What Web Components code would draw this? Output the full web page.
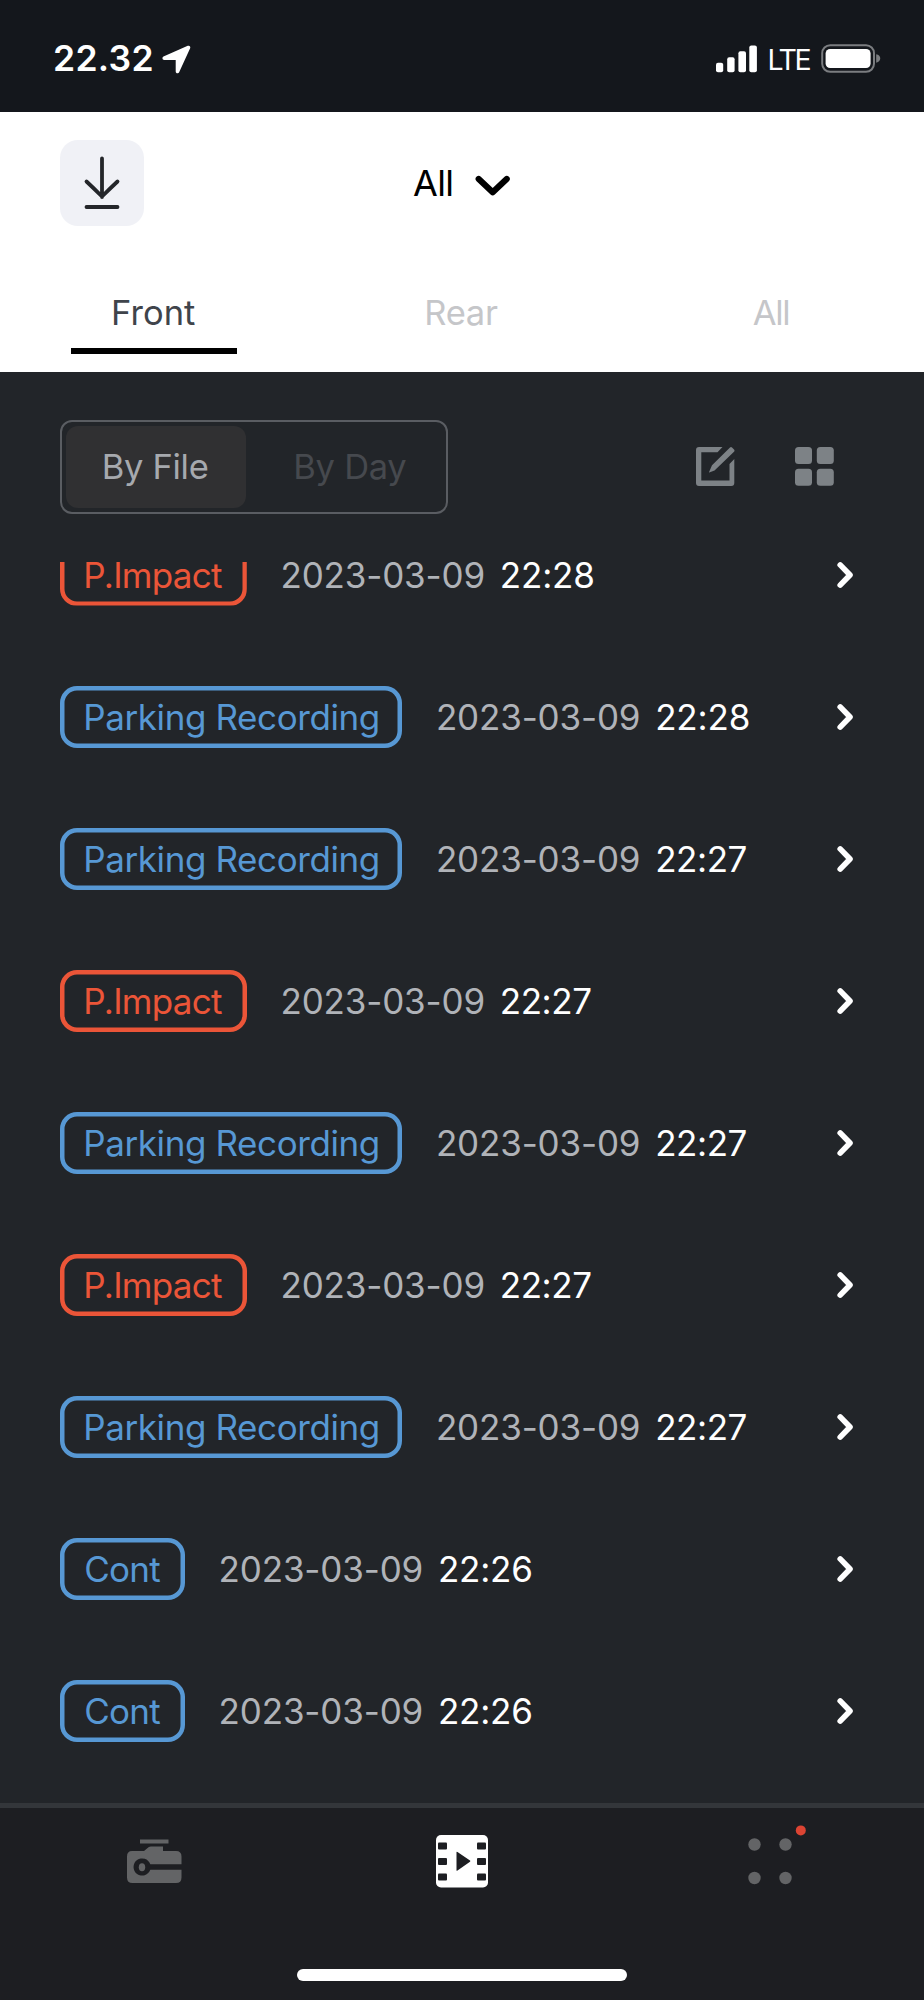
<!DOCTYPE html>
<html lang="en">
<head>
<meta charset="utf-8">
<title>Recordings</title>
<style>
html,body{margin:0;padding:0;background:#222529}
body{width:924px;height:2000px;overflow:hidden;font-family:Inter,"Liberation Sans",sans-serif}
</style>
</head>
<body>
<recordings-app></recordings-app>
<script>
function define(name, html, setup) {
  customElements.define(name, class extends HTMLElement {
    connectedCallback() {
      if (this.shadowRoot) return;
      const root = this.attachShadow({ mode: 'open' });
      const t = document.createElement('template');
      t.innerHTML = html;
      root.append(t.content.cloneNode(true));
      if (setup) setup(this, root);
    }
  });
}

// A label whose tracking is adjusted so that its ink fills the width in "w".
const pen = document.createElement('canvas').getContext('2d');
define('fit-text', `<style>
:host{display:block;flex:none;height:40px;line-height:40px;white-space:pre}
span{display:block;white-space:pre}
</style><span></span>`, (el, root) => {
  const text = el.getAttribute('text');
  const size = +(el.getAttribute('size') || 35);
  const weight = el.getAttribute('weight') || 400;
  const w = +el.getAttribute('w');
  const span = root.querySelector('span');
  span.textContent = text;
  span.style.fontSize = size + 'px';
  span.style.fontWeight = weight;
  pen.font = `${weight} ${size}px Inter, "Liberation Sans", sans-serif`;
  const m = pen.measureText(text);
  const ink = m.actualBoundingBoxLeft + m.actualBoundingBoxRight;
  span.style.letterSpacing = ((w - ink) / (text.length - 1)).toFixed(3) + 'px';
  span.style.marginLeft = m.actualBoundingBoxLeft.toFixed(2) + 'px';
  el.style.width = w + 'px';
});

define('status-bar', `<style>
:host{display:flex;box-sizing:border-box;height:111.5px;padding:0 42px 0 55px;background:#14171c;color:#fff;align-items:flex-start}
.time{margin-top:39px}
svg{display:block;flex:none}
.loc{margin:44px 0 0 9.8px}
.sig{margin:44px 0 0 auto}
.lte{margin:40px 0 0 12px}
.bat{margin:43px 0 0 10.6px}
</style>
<fit-text class="time" text="22.32" size="35.5" weight="600" w="96.5"></fit-text>
<svg class="loc" width="31" height="31" viewBox="0 0 31 31"><path d="M27.5 3.5 16.500 27.500V14.200H3.200Z" fill="#fff" stroke="#fff" stroke-width="3.600" stroke-linejoin="round"/></svg>
<svg class="sig" width="41" height="29" viewBox="0 0 41 29" fill="#fff"><rect x="0" y="18.7" width="7.2" height="9.6" rx="2"/><rect x="11.2" y="13.2" width="7.4" height="15.1" rx="2"/><rect x="22.4" y="7.2" width="7.6" height="21.1" rx="2"/><rect x="33.3" y="1.4" width="7.6" height="26.9" rx="2"/></svg>
<fit-text class="lte" text="LTE" size="28.5" w="41"></fit-text>
<svg class="bat" width="61" height="31" viewBox="0 0 61 31"><rect x="1.2" y="2.200" width="51.800" height="26.600" rx="8" fill="none" stroke="#7b7d80" stroke-width="2"/><rect x="4.600" y="6" width="45" height="19" rx="4.500" fill="#fff"/><path d="M55.200 11.300c5.400 1 5.400 7.400 0 8.400Z" fill="#7b7d80"/></svg>`);

define('title-bar', `<style>
:host{display:flex;height:144px;box-sizing:border-box;padding:28.5px 0 0 60px;align-items:flex-start;background:#fff;color:#000}
.dl{width:84px;height:85.5px;border-radius:18px;background:#f0f1f6;flex:none}
svg{display:block;flex:none}
fit-text{margin:23px 0 0 269px}
.ch{margin:31px 0 0 23px}
</style>
<div class="dl"><svg width="84" height="85" viewBox="0 0 84 85" fill="none" stroke="#24262a" stroke-width="3.8" stroke-linecap="round"><path d="M42 18.5V57M26.5 41.5Q34 48.500 42 56.500 50 48.500 57.500 41.500M26.500 67H57.500"/></svg></div>
<fit-text text="All" size="36" w="38.3"></fit-text>
<svg class="ch" width="38" height="28" viewBox="0 0 38 28"><path d="M4.700 8 18.700 21.300 32.700 8" fill="none" stroke="#000" stroke-width="6.200" stroke-linecap="round" stroke-linejoin="round"/></svg>`);

define('camera-tab', `<style>
:host{display:flex;flex-direction:column;align-items:center;color:#c5c6c9;box-sizing:border-box;height:116.500px;padding-top:37px}
:host([active]){color:#3f444b}
fit-text{padding-left:1.200px}
i{display:none;width:165.500px;height:5.500px;background:#000;margin-top:15.500px}
:host([active]) i{display:block}
</style><i></i>`, (el, root) => {
  const label = document.createElement('fit-text');
  label.setAttribute('text', el.getAttribute('text'));
  label.setAttribute('size', 34.5);
  label.setAttribute('w', el.getAttribute('w'));
  root.querySelector('i').before(label);
});

define('camera-tabs', `<style>
:host{display:grid;grid-template-columns:repeat(3,308px);background:#fff}
</style><camera-tab active text="Front" w="81"></camera-tab><camera-tab text="Rear" w="70.700"></camera-tab><camera-tab text="All" w="35.500"></camera-tab>`);

define('view-tools', `<style>
:host{display:flex;align-items:flex-start;box-sizing:border-box;height:189.500px;padding:47.700px 90px 0 59.700px}
.seg{display:flex;box-sizing:border-box;width:388.300px;height:94.300px;border:2px solid #5a5d62;border-radius:12px;padding:4.500px}
.seg div{box-sizing:border-box;display:flex;align-items:center;justify-content:center;height:81.500px;border-radius:12px}
.on{width:180px;background:#303032;color:#a6a9ae}
.off{flex:1;color:#46494e;padding-left:15px}
svg{display:block;flex:none;margin-top:27.300px}
.edit{margin-left:auto}
.grid{margin-left:60.500px}
</style>
<div class="seg"><div class="on"><fit-text text="By File" size="34.500" w="103"></fit-text></div><div class="off"><fit-text text="By Day" size="34.500" w="110"></fit-text></div></div>
<svg class="edit" width="39" height="39" viewBox="0 0 39 39" fill="#7d8286"><path d="M26.500 0 21.500 5.200H5.300V33.500H33.500V17L38.300 12V36a3 3 0 0 1-3 3H3a3 3 0 0 1-3-3V3A3 3 0 0 1 3 0Z"/><path d="M34 .6Q35-.4 36 .6L38 2.600Q39 3.600 38 4.700L18.500 23.500 13.200 25.600Q12.800 25.300 13.200 24.800L16 18.200Z"/></svg>
<svg class="grid" width="39" height="39" viewBox="0 0 39 39" fill="#7d8286"><rect width="17" height="17" rx="3.500"/><rect x="21.800" width="17" height="17" rx="3.500"/><rect y="21.800" width="17" height="17" rx="3.500"/><rect x="21.800" y="21.800" width="17" height="17" rx="3.500"/></svg>`);

const KINDS = {
  impact: { label: 'P.Impact', w: 135.800, box: 187.200, color: '#eb5538' },
  parking: { label: 'Parking Recording', w: 291.500, box: 342.600, color: '#5798d4' },
  cont: { label: 'Cont', w: 74, box: 125.300, color: '#5798d4' }
};
define('record-badge', `<style>
:host{position:relative;display:flex;flex:none;box-sizing:border-box;height:62px;align-items:center;padding-left:26.700px}
.frame{position:absolute;inset:0;border-radius:17px;box-shadow:inset 0 0 0 4.500px currentColor}
:host([cut]) .frame{clip-path:inset(18.500px 0 0 0)}
</style><div class="frame"></div>`, (el, root) => {
  const k = KINDS[el.getAttribute('kind')];
  el.style.color = k.color;
  el.style.width = k.box + 'px';
  const t = document.createElement('fit-text');
  t.setAttribute('text', k.label);
  t.setAttribute('w', k.w);
  root.append(t);
});

const TIME_WIDTH = { '22:28': 91.500, '22:27': 89.400, '22:26': 91.400 };
define('record-row', `<style>
:host{display:flex;flex:none;align-items:center;box-sizing:border-box;height:142.100px;padding:0 69px 0 59.600px;color:#fff}
.date{color:#b0b3b8;margin-left:35.700px}
.time{margin-left:18.300px}
svg{margin-left:auto;flex:none;display:block}
</style>`, (el, root) => {
  const time = el.getAttribute('time');
  const t = document.createElement('template');
  t.innerHTML = `<record-badge kind="${el.getAttribute('kind')}"${el.hasAttribute('cut') ? ' cut' : ''}></record-badge>
<fit-text class="date" text="2023-03-09" w="201"></fit-text>
<fit-text class="time" text="${time}" w="${TIME_WIDTH[time]}"></fit-text>
<svg width="20" height="30" viewBox="0 0 20 30"><path d="M5.200 4.900 15 15 5.200 25.100" fill="none" stroke="#fff" stroke-width="5.600" stroke-linecap="round" stroke-linejoin="round"/></svg>`;
  root.append(t.content);
});

define('record-list', `<style>
:host{display:flex;flex-direction:column;height:1241.500px}
record-row:first-of-type{margin-top:-58px}
</style>
<record-row kind="impact" time="22:28" cut></record-row>
<record-row kind="parking" time="22:28"></record-row>
<record-row kind="parking" time="22:27"></record-row>
<record-row kind="impact" time="22:27"></record-row>
<record-row kind="parking" time="22:27"></record-row>
<record-row kind="impact" time="22:27"></record-row>
<record-row kind="parking" time="22:27"></record-row>
<record-row kind="cont" time="22:26"></record-row>
<record-row kind="cont" time="22:26"></record-row>`);

define('nav-bar', `<style>
:host{display:flex;flex-direction:column;align-items:center;box-sizing:border-box;height:197px;border-top:5px solid #33363a;background:#1d1e22}
nav{display:grid;grid-template-columns:repeat(3,308px);justify-items:center;height:161.200px}
svg{display:block;margin-top:12px}
.home{width:330px;height:12.300px;border-radius:7px;background:#fff}
</style>
<nav>
<svg width="80" height="80" viewBox="0 0 80 80"><g fill="#636466"><path d="M26 19.500H54.500V23.500H26ZM18 31H30L34.500 27.200Q35.500 26.500 37 26.500H49V31H62Q67.500 31 67.500 36.500V44.300H36.300A8.600 8.600 0 1 0 36.300 49.700H67.500V57.500Q67.500 63 62 63H18.500Q13 63 13 57.500V36.500Q13 31 18 31Z"/><ellipse cx="28" cy="47.200" rx="3.200" ry="4"/></g></svg>
<svg width="80" height="80" viewBox="0 0 80 80"><rect x="14" y="15" width="52" height="52.500" rx="5" fill="#fff"/><g fill="#1d1e22"><rect x="16" y="22.500" width="9" height="7" rx="1"/><rect x="16" y="38" width="9" height="7" rx="1"/><rect x="16" y="53.500" width="9" height="7" rx="1"/><rect x="55" y="22.500" width="9" height="7" rx="1"/><rect x="55" y="38" width="9" height="7" rx="1"/><rect x="55" y="53.500" width="9" height="7" rx="1"/><path d="M34.500 32.200Q34.500 31.300 35.500 32L48 40.600Q48.800 41.200 48 41.800L35.500 50.500Q34.500 51.200 34.500 50.300Z"/></g></svg>
<svg width="80" height="80" viewBox="0 0 80 80"><g fill="#636466"><circle cx="24.500" cy="24.500" r="6.200"/><circle cx="55.500" cy="24.500" r="6.200"/><circle cx="24.500" cy="58" r="6.200"/><circle cx="55.500" cy="58" r="6.200"/></g><circle cx="70.800" cy="10.400" r="5" fill="#dc4433"/></svg>
</nav>
<div class="home"></div>`);

define('recordings-app', `<style>
:host{display:flex;flex-direction:column;width:924px;height:2000px;background:#222529;overflow:hidden}
:host>*{flex:none}
</style>
<status-bar></status-bar><title-bar></title-bar><camera-tabs></camera-tabs><view-tools></view-tools><record-list></record-list><nav-bar></nav-bar>`);
</script>
</body>
</html>
